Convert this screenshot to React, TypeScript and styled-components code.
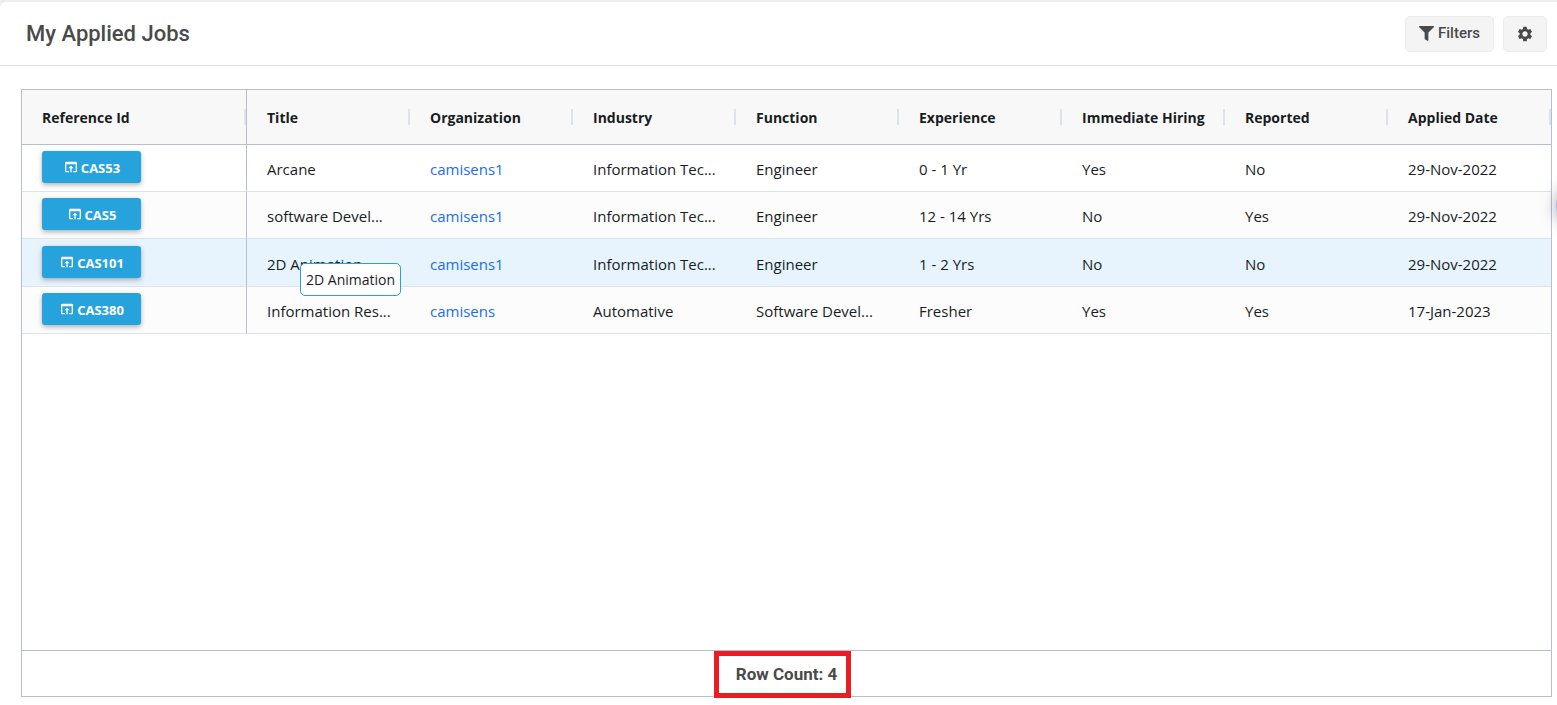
import React from "react";
import styled, { createGlobalStyle, css } from "styled-components";
import { MdOpenInBrowser, MdSettings } from "react-icons/md";
import { FaFilter } from "react-icons/fa";

const GlobalStyle = createGlobalStyle`
  *, *::before, *::after { box-sizing: border-box; }
  body {
    margin: 0;
    background: #ededed;
    color: #4a4a4a;
    font-family: Roboto, "Liberation Sans", sans-serif;
    overflow-x: hidden;
  }
`;

const Page = styled.div`
  min-height: 100vh;
  padding-top: 2px;
  display: flex;
`;

const Card = styled.main`
  flex: 1;
  min-width: 0;
  display: flex;
  flex-direction: column;
  background: #fff;
  border-top-left-radius: 6px;
`;

const Header = styled.header`
  height: 64px;
  display: flex;
  align-items: center;
  justify-content: space-between;
  padding: 0 10px 0 26px;
  border-bottom: 1px solid #dee0e2;
`;

const Heading = styled.h1`
  margin: 0;
  font-size: 22px;
  line-height: 28px;
  font-weight: 500;
`;

const Toolbar = styled.div`
  display: flex;
  gap: 9px;
`;

const ToolButton = styled.button`
  height: 36px;
  display: flex;
  align-items: center;
  gap: 4px;
  padding: 0 13px;
  border: 1px solid #ececec;
  border-radius: 5px;
  background: #f4f4f4;
  color: #4a4a4a;
  font: 500 15px/20px Roboto, sans-serif;
`;

const IconButton = styled(ToolButton)`
  padding: 0 12px;
`;

const ButtonLabel = styled.span`
  padding-bottom: 2px;
`;

const Grid = styled.section`
  flex: 1;
  display: flex;
  flex-direction: column;
  margin: 23px 5px 8px 21px;
  border: 1px solid #babfc7;
  font-family: "Open Sans", "Noto Sans", sans-serif;
  font-size: 15px;
  line-height: 20px;
  color: #181d1f;
`;

const Table = styled.table`
  width: 100%;
  table-layout: fixed;
  border-collapse: separate;
  border-spacing: 0;
`;

const firstColumn = css`
  &:first-child {
    width: 225px;
    border-right: 1px solid #babfc7;
  }
`;

const HeadCell = styled.th`
  position: relative;
  height: 55px;
  padding: 2px 16px 0 20px;
  background: #f8f8f8;
  border-bottom: 1px solid #babfc7;
  text-align: left;
  font-size: 14px;
  font-weight: 700;
  white-space: nowrap;
  ${firstColumn}

  &::after {
    content: "";
    position: absolute;
    top: 19px;
    right: 0;
    width: 2px;
    height: 16px;
    background: #dde2eb;
  }
`;

const Row = styled.tr<{ $hovered?: boolean }>`
  height: ${(p) => (p.$hovered ? 48 : 47)}px;
  background: ${(p) => (p.$hovered ? "#e7f4fe" : "#fcfcfc")};
  &:first-child {
    background: #fff;
  }
`;

const Cell = styled.td`
  padding: 2px 16px 0 20px;
  border-bottom: 1px solid #dde2eb;
  overflow: hidden;
  text-overflow: ellipsis;
  white-space: nowrap;
  ${firstColumn}

  &:first-child {
    padding: 0 20px 2px;
  }
`;

const IdButton = styled.button`
  height: 32px;
  min-width: 99px;
  display: flex;
  align-items: center;
  justify-content: center;
  gap: 2px;
  padding: 0 16px;
  border: 0;
  border-radius: 3px;
  background: #26a3dd;
  box-shadow: 0 2px 5px rgba(0, 0, 0, 0.3);
  color: #fff;
  font: 700 13px/20px "Open Sans", "Noto Sans", sans-serif;
`;

const ButtonText = styled.span`
  padding-top: 2px;
`;

const OrgLink = styled.a`
  color: #1a6df0;
  text-decoration: none;
`;

const Tooltip = styled.div`
  position: absolute;
  left: 300px;
  top: 263px;
  padding: 6px 5px 5px;
  border: 1px solid #26a3dd;
  border-radius: 5px;
  background: #fff;
  color: #181d1f;
  font: 14px/20px "Open Sans", "Noto Sans", sans-serif;
`;

const Footer = styled.footer`
  margin-top: auto;
  height: 46px;
  display: flex;
  align-items: center;
  justify-content: center;
  border-top: 1px solid #babfc7;
  color: #4a4a4a;
  font: 700 17px/20px Roboto, sans-serif;
`;

const RowCount = styled.span`
  position: relative;

  &::after {
    content: "";
    position: absolute;
    inset: -13px -14px -14px -22px;
    border: 5px solid #ed1c24;
  }
`;

const SideHandle = styled.div`
  position: fixed;
  top: 186px;
  right: -39px;
  width: 40px;
  height: 40px;
  border-radius: 50%;
  background: #b4b4f4;
  box-shadow: 0 0 16px rgba(0, 0, 0, 0.35);
`;

const columns = [
  "Reference Id",
  "Title",
  "Organization",
  "Industry",
  "Function",
  "Experience",
  "Immediate Hiring",
  "Reported",
  "Applied Date",
];

const jobs = [
  { id: "CAS53", title: "Arcane", org: "camisens1", rest: ["Information Tec...", "Engineer", "0 - 1 Yr", "Yes", "No", "29-Nov-2022"] },
  { id: "CAS5", title: "software Devel...", org: "camisens1", rest: ["Information Tec...", "Engineer", "12 - 14 Yrs", "No", "Yes", "29-Nov-2022"] },
  { id: "CAS101", title: "2D Animation", org: "camisens1", rest: ["Information Tec...", "Engineer", "1 - 2 Yrs", "No", "No", "29-Nov-2022"] },
  { id: "CAS380", title: "Information Res...", org: "camisens", rest: ["Automative", "Software Devel...", "Fresher", "Yes", "Yes", "17-Jan-2023"] },
];

export default function App() {
  return (
    <Page>
      <GlobalStyle />
      <Card>
        <Header>
          <Heading>My Applied Jobs</Heading>
          <Toolbar>
            <ToolButton type="button">
              <FaFilter size={15} />
              <ButtonLabel>Filters</ButtonLabel>
            </ToolButton>
            <IconButton type="button" aria-label="Settings">
              <MdSettings size={18} />
            </IconButton>
          </Toolbar>
        </Header>
        <Grid>
          <Table>
            <thead>
              <tr>
                {columns.map((c) => (
                  <HeadCell key={c} scope="col">{c}</HeadCell>
                ))}
              </tr>
            </thead>
            <tbody>
              {jobs.map((job) => (
                <Row key={job.id} $hovered={job.id === "CAS101"}>
                  <Cell>
                    <IdButton type="button">
                      <MdOpenInBrowser size={16} />
                      <ButtonText>{job.id}</ButtonText>
                    </IdButton>
                  </Cell>
                  <Cell>{job.title}</Cell>
                  <Cell><OrgLink href="#">{job.org}</OrgLink></Cell>
                  {job.rest.map((value, i) => (
                    <Cell key={i}>{value}</Cell>
                  ))}
                </Row>
              ))}
            </tbody>
          </Table>
          <Footer>
            <RowCount>Row Count: 4</RowCount>
          </Footer>
        </Grid>
      </Card>
      <Tooltip role="tooltip">2D Animation</Tooltip>
      <SideHandle />
    </Page>
  );
}
